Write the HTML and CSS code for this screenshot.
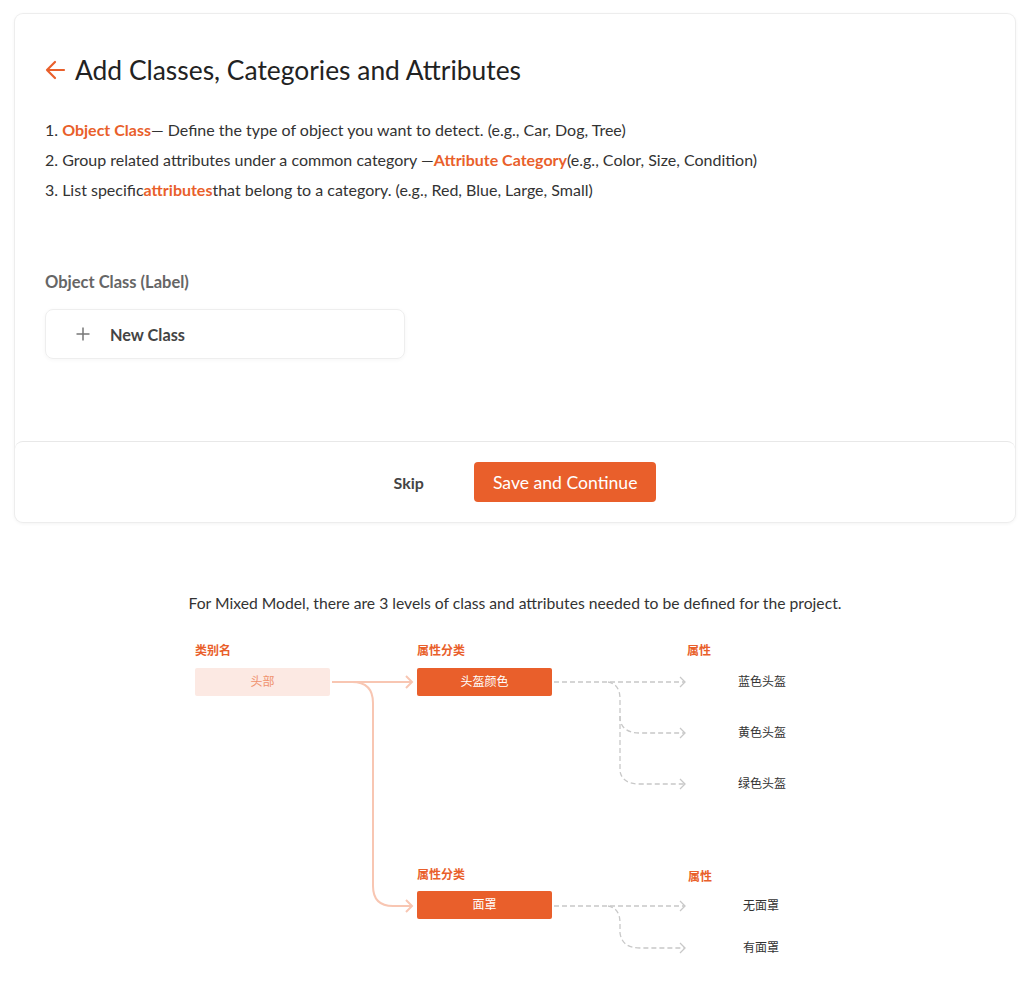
FILE: index.html
```html
<!DOCTYPE html>
<html>
<head>
    <meta charset="utf-8">
    <title>Add Classes, Categories and Attributes</title>
    <link rel="stylesheet" href="styles.css">
</head>
<body>
    <div class="card">
        <div class="card-body">
            <h1 class="title">
                <svg class="back" width="22" height="22" viewBox="0 0 22 22"><path d="M20 11H3M11 3L3 11l8 8" fill="none" stroke="#e95f2b" stroke-width="2.2" stroke-linecap="round" stroke-linejoin="round"/></svg>
                Add Classes, Categories and Attributes
            </h1>
            <ol class="steps">
                <li>1. <b>Object Class</b>— Define the type of object you want to detect. (e.g., Car, Dog, Tree)</li>
                <li>2. Group related attributes under a common category —<b>Attribute Category</b>(e.g., Color, Size, Condition)</li>
                <li>3. List specific<b>attributes</b>that belong to a category. (e.g., Red, Blue, Large, Small)</li>
            </ol>
            <div class="label">Object Class (Label)</div>
            <div class="new-class">
                <svg class="plus" width="14" height="14" viewBox="0 0 14 14"><path d="M7 0.5V13.5M0.5 7H13.5" stroke="#777" stroke-width="1.5"/></svg>
                <span>New Class</span>
            </div>
        </div>
        <div class="card-footer">
            <button class="skip">Skip</button>
            <button class="primary">Save and Continue</button>
        </div>
    </div>

    <p class="note">For Mixed Model, there are 3 levels of class and attributes needed to be defined for the project.</p>

    <div class="diagram">
        <svg class="lines" width="1000" height="340" viewBox="0 0 1000 340">
            <g fill="none" stroke="#f8c6b2" stroke-width="2">
                <path d="M317 51H397"/>
                <path d="M391 45l6 6-6 6"/>
                <path d="M337 51Q358 51 358 72V255Q358 275 378 275H397"/>
                <path d="M391 269l6 6-6 6"/>
            </g>
            <g fill="none" stroke="#c8c8c8" stroke-width="1.3" stroke-dasharray="5 3">
                <path d="M539 51H669"/>
                <path d="M593 51Q605 53 605 68V88Q607 102 625 102H669"/>
                <path d="M605 85V140Q607 153 625 153H669"/>
                <path d="M539 275H669"/>
                <path d="M593 275Q605 277 605 292V302Q607 317 625 317H669"/>
            </g>
            <g fill="none" stroke="#c8c8c8" stroke-width="1.3">
                <path d="M665 46l5 5-5 5"/>
                <path d="M665 97l5 5-5 5"/>
                <path d="M665 148l5 5-5 5"/>
                <path d="M665 270l5 5-5 5"/>
                <path d="M665 312l5 5-5 5"/>
            </g>
        </svg>

        <div class="tag" style="left:180px;top:12px">类别名</div>
        <div class="node light" style="left:180px;top:37px">头部</div>

        <div class="tag" style="left:402px;top:12px">属性分类</div>
        <div class="node solid" style="left:402px;top:37px">头盔颜色</div>
        <div class="tag" style="left:672px;top:12px">属性</div>
        <div class="attr" style="left:723px;top:43px">蓝色头盔</div>
        <div class="attr" style="left:723px;top:94px">黄色头盔</div>
        <div class="attr" style="left:723px;top:145px">绿色头盔</div>

        <div class="tag" style="left:402px;top:236px">属性分类</div>
        <div class="node solid" style="left:402px;top:260px">面罩</div>
        <div class="tag" style="left:673px;top:238px">属性</div>
        <div class="attr" style="left:728px;top:267px">无面罩</div>
        <div class="attr" style="left:728px;top:309px">有面罩</div>
    </div>
</body>
</html>
```

FILE: styles.css
```css
body {
    margin: 0;
    padding: 14px 6px 0 15px;
    font-family: Lato, "Noto Sans CJK SC", sans-serif;
    color: #333;
    background: #fff;
}

.card {
    width: 1000px;
    border-radius: 8px;
    background: #fff;
    box-shadow: 0 0 0 1px #ededed, 0 1px 4px rgba(0,0,0,0.07);
}

.card-body {
    padding: 40px 30px 82px 30px;
}

.title {
    display: flex;
    align-items: center;
    gap: 9px;
    margin: 0;
    font-size: 26.4px;
    line-height: 32px;
    font-weight: 400;
    color: #222;
}

.back {
    display: block;
    margin-left: -1px;
}

.steps {
    list-style: none;
    margin: 29px 0 0 0;
    padding: 0;
    font-size: 16px;
    line-height: 30px;
}

.steps b {
    color: #e95f2b;
}

.label {
    margin-top: 66px;
    font-size: 16.5px;
    font-weight: 700;
    color: #666;
    line-height: 22px;
}

.new-class {
    display: flex;
    align-items: center;
    width: 358px;
    height: 48px;
    margin-top: 16px;
    border: 1px solid #eee;
    border-radius: 8px;
    box-shadow: 0 1px 4px rgba(0,0,0,0.04);
    font-size: 16.3px;
    font-weight: 700;
    color: #444;
}

.plus {
    display: block;
    margin: 0 20px 0 30px;
}

.card-footer {
    display: flex;
    justify-content: center;
    align-items: center;
    gap: 50px;
    height: 80px;
    padding-left: 20px;
    border-top: 1px solid #e8e8e8;
    border-radius: 8px;
}

.card-footer button {
    font-family: Lato, sans-serif;
    border: none;
    cursor: pointer;
}

.skip {
    background: none;
    font-size: 16px;
    font-weight: 700;
    color: #444;
    padding: 0;
}

.primary {
    height: 40px;
    padding: 0 19px;
    background: #e95f2b;
    color: #fff;
    border-radius: 4px;
    font-size: 17.6px;
}

.note {
    width: 1000px;
    margin: 71px 0 0 0;
    text-align: center;
    font-size: 15.7px;
    line-height: 20px;
}

.diagram {
    position: relative;
    width: 1000px;
    height: 340px;
    margin-top: 18px;
}

.lines {
    position: absolute;
    left: 0;
    top: 0;
}

.tag {
    position: absolute;
    font-size: 12px;
    font-weight: 700;
    color: #e95f2b;
    line-height: 16px;
}

.node {
    position: absolute;
    width: 135px;
    height: 28px;
    line-height: 28px;
    border-radius: 2px;
    text-align: center;
    font-size: 12px;
}

.node.light {
    background: #fce9e3;
    color: #f0926e;
}

.node.solid {
    background: #e95f2b;
    color: #fff;
}

.attr {
    position: absolute;
    font-size: 12px;
    line-height: 16px;
    color: #333;
}
```
